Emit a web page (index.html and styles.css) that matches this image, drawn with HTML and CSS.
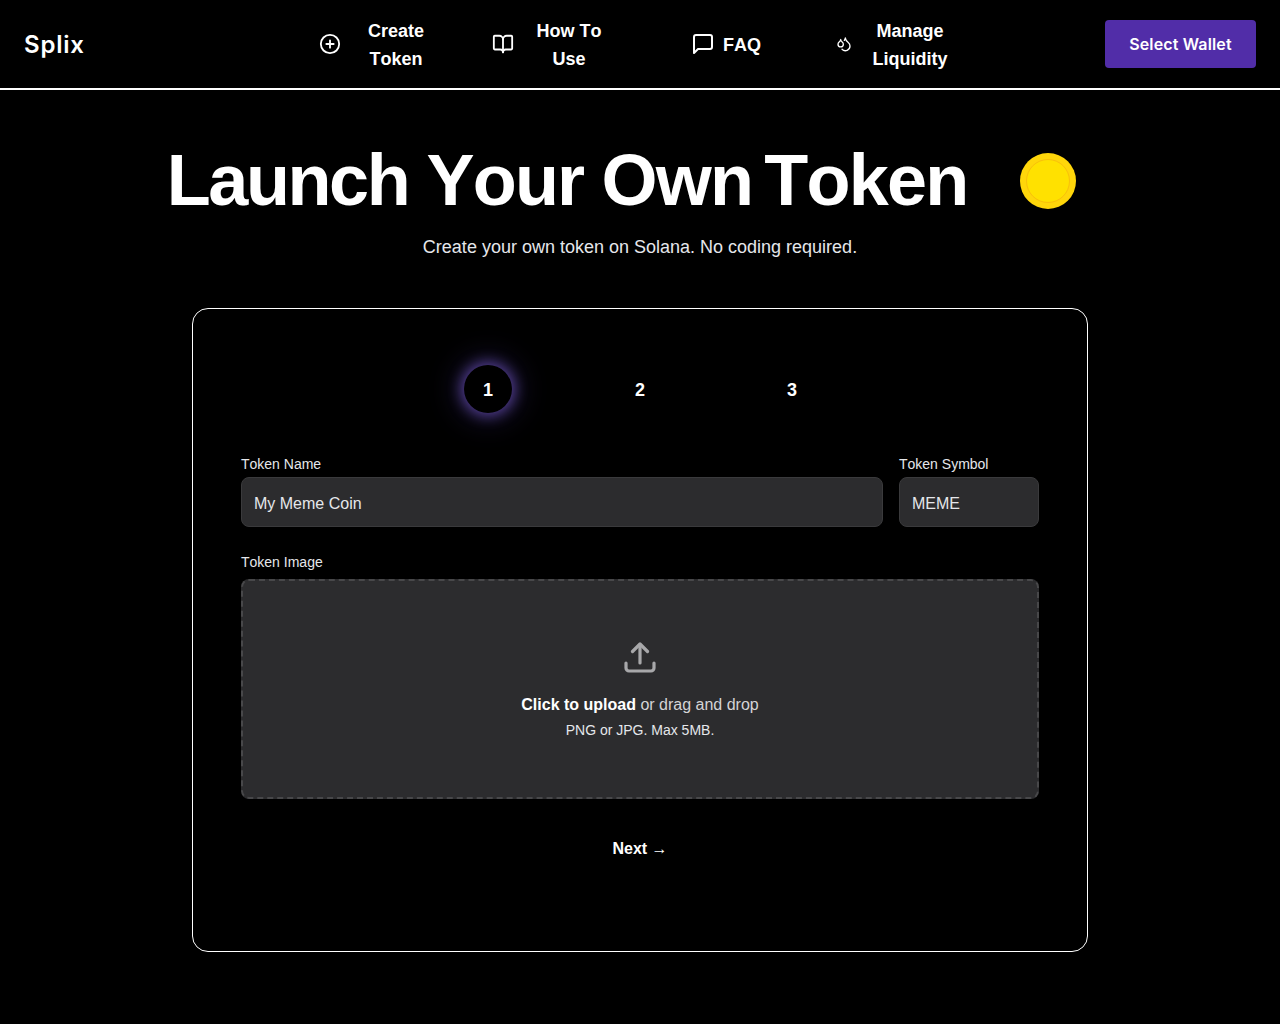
FILE: index.html
```html
<!DOCTYPE html>
<html lang="en">
<head>
    <meta charset="UTF-8">
    <meta name="viewport" content="width=device-width, initial-scale=1.0">
    <title>Splix - Launch Your Own Token</title>
    <link rel="stylesheet" href="styles.css">
</head>
<body>
    <header class="topbar">
        <a class="logo" href="#">Splix</a>
        <nav class="nav-links">
            <a class="nav-link nav-link-first" href="#">
                <svg class="nav-icon" width="22" height="22" viewBox="0 0 24 24"><circle cx="12" cy="12" r="10"/><path d="M8 12h8M12 8v8"/></svg>
                <span class="nav-text">Create Token</span>
            </a>
            <a class="nav-link" href="#">
                <svg class="nav-icon" width="22" height="22" viewBox="0 0 24 24"><path d="M12 7v14"/><path d="M3 18a1 1 0 0 1-1-1V4a1 1 0 0 1 1-1h5a4 4 0 0 1 4 4 4 4 0 0 1 4-4h5a1 1 0 0 1 1 1v13a1 1 0 0 1-1 1h-6a3 3 0 0 0-3 3 3 3 0 0 0-3-3z"/></svg>
                <span class="nav-text">How To Use</span>
            </a>
            <a class="nav-link nav-link-faq" href="#">
                <svg class="nav-icon" width="24" height="24" viewBox="0 0 24 24"><path d="M21 15a2 2 0 0 1-2 2H7l-4 4V5a2 2 0 0 1 2-2h14a2 2 0 0 1 2 2z"/></svg>
                <span class="faq-text">FAQ</span>
            </a>
            <a class="nav-link nav-link-last" href="#">
                <svg class="nav-icon" width="20" height="16" viewBox="0 0 24 24"><path d="M7 16.3c2.2 0 4-1.83 4-4.05 0-1.16-.57-2.26-1.71-3.19S7.29 6.75 7 5.3c-.29 1.45-1.14 2.84-2.29 3.76S3 11.1 3 12.25c0 2.22 1.8 4.05 4 4.05z"/><path d="M12.56 6.6A10.97 10.97 0 0 0 14 3.02c.5 2.5 2 4.9 4 6.5s3 3.5 3 5.5a6.98 6.98 0 0 1-11.91 4.97"/></svg>
                <span class="nav-text">Manage Liquidity</span>
            </a>
        </nav>
        <button class="wallet-btn">Select Wallet</button>
    </header>

    <main class="page">
        <div class="hero-title">
            <h1><span class="title-first">Launch</span> Your Own <span class="title-last">Token</span></h1>
            <div class="coin"><div class="coin-inner"></div></div>
        </div>
        <p class="subtitle">Create your own token on Solana. No coding required.</p>

        <section class="card">
            <div class="steps">
                <div class="step step-active">1</div>
                <div class="step">2</div>
                <div class="step">3</div>
            </div>

            <div class="field-row">
                <div class="field field-name">
                    <label for="tokenName">Token Name</label>
                    <input id="tokenName" type="text" placeholder="My Meme Coin">
                </div>
                <div class="field field-symbol">
                    <label for="tokenSymbol">Token Symbol</label>
                    <input id="tokenSymbol" type="text" placeholder="MEME">
                </div>
            </div>

            <div class="field field-image">
                <label>Token Image</label>
                <div class="dropzone">
                    <svg class="upload-icon" width="32" height="32" viewBox="0 0 32 32"><path d="M2 21v5a3 3 0 0 0 3 3h22a3 3 0 0 0 3-3v-5"/><path d="M16 21V3"/><path d="M8.5 9.5 16 2l7.5 7.5"/></svg>
                    <p class="drop-text"><strong>Click to upload</strong> or drag and drop</p>
                    <p class="drop-hint">PNG or JPG. Max 5MB.</p>
                </div>
            </div>

            <button class="next-btn">Next →</button>
        </section>
    </main>
</body>
</html>
```

FILE: styles.css
```css
* {
    box-sizing: border-box;
}

body {
    margin: 0;
    background-color: #000;
    color: #fff;
    font-family: "Liberation Sans", Arial, sans-serif;
    font-kerning: none;
}

a {
    color: inherit;
    text-decoration: none;
}

.topbar {
    display: grid;
    grid-template-columns: 1fr auto 1fr;
    align-items: center;
    height: 90px;
    padding: 0 24px;
    border-bottom: 2px solid #fff;
}

.logo {
    font-family: Inter, sans-serif;
    font-size: 24px;
    font-weight: 600;
    letter-spacing: 0.8px;
}

.nav-links {
    display: flex;
    align-items: center;
    gap: 49px;
    margin-left: -4px;
}

.nav-link {
    display: flex;
    align-items: center;
    gap: 7px;
    font-size: 18px;
    font-weight: 700;
    line-height: 28px;
}

.nav-link-first {
    margin-right: -1px;
}

.nav-link-faq {
    gap: 8px;
    margin: 0 24px 0 25px;
}

.nav-link-last {
    gap: 8px;
    margin-right: -1px;
}

.nav-text {
    width: 96px;
    padding-top: 2px;
    text-align: center;
}

.faq-text {
    padding-top: 2px;
}

.nav-icon {
    flex: none;
    fill: none;
    stroke: #fff;
    stroke-width: 2;
    stroke-linecap: round;
    stroke-linejoin: round;
}

.wallet-btn {
    justify-self: end;
    width: 151px;
    height: 48px;
    border: none;
    border-radius: 4px;
    background-color: #512da8;
    color: #fff;
    font-family: Inter, sans-serif;
    font-size: 16px;
    font-weight: 600;
    letter-spacing: 0.15px;
}

.page {
    display: flex;
    flex-direction: column;
    align-items: center;
    padding-bottom: 72px;
}

.hero-title {
    display: flex;
    align-items: center;
    gap: 53px;
    height: 92px;
    margin-top: 44px;
}

.hero-title h1 {
    margin: 0;
    font-size: 72px;
    font-weight: 700;
    line-height: 92px;
    letter-spacing: -1.8px;
}

.title-first {
    letter-spacing: -2.4px;
}

.title-last {
    margin-left: -6px;
}

.coin {
    display: flex;
    align-items: center;
    justify-content: center;
    width: 56px;
    height: 56px;
    margin-top: 2px;
    margin-right: 37px;
    border-radius: 50%;
    background-color: #ffd60a;
}

.coin-inner {
    width: 44px;
    height: 44px;
    border: 1px solid #f9c00b;
    border-radius: 50%;
    background-color: #ffe100;
}

.subtitle {
    margin: 7px 0 0;
    font-size: 18px;
    line-height: 28px;
    color: #e5e7eb;
}

.card {
    width: 896px;
    height: 644px;
    margin-top: 47px;
    padding: 56px 48px 48px;
    border: 1px solid #fff;
    border-radius: 16px;
}

.steps {
    display: flex;
    justify-content: center;
    gap: 104px;
    margin-bottom: 41px;
}

.step {
    display: flex;
    align-items: center;
    justify-content: center;
    width: 48px;
    height: 48px;
    padding-top: 3px;
    border-radius: 50%;
    font-size: 18px;
    font-weight: 700;
}

.step-active {
    box-shadow: 0 0 14px 3px rgba(120, 90, 210, 0.65), 0 0 30px 8px rgba(90, 70, 180, 0.25);
}

.field-row {
    display: flex;
    gap: 16px;
    margin-bottom: 25px;
}

.field-name {
    flex: 1;
}

.field-symbol {
    width: 140px;
}

.field label {
    display: block;
    margin-bottom: 3px;
    font-size: 14px;
    line-height: 20px;
    color: #e5e7eb;
}

.field-image label {
    margin-bottom: 7px;
}

.field input {
    display: block;
    width: 100%;
    height: 50px;
    padding: 3px 12px 0;
    border: 1px solid #3a3a3c;
    border-radius: 8px;
    background-color: #2c2c2e;
    color: #fff;
    font-family: inherit;
    font-size: 16px;
}

.field input::placeholder {
    color: #e5e7eb;
    opacity: 1;
}

.dropzone {
    display: flex;
    flex-direction: column;
    align-items: center;
    height: 220px;
    padding-top: 61px;
    border: 2px dashed #48484a;
    border-radius: 8px;
    background-color: #2c2c2e;
}

.upload-icon {
    fill: none;
    stroke: #a8a8aa;
    stroke-width: 3.2;
    stroke-linecap: round;
    stroke-linejoin: round;
}

.drop-text {
    margin: 19px 0 0;
    font-size: 16px;
    line-height: 24px;
    color: #d4d4d6;
}

.drop-text strong {
    color: #fff;
}

.drop-hint {
    margin: 3px 0 0;
    font-size: 14px;
    line-height: 20px;
    color: #e5e7eb;
}

.next-btn {
    display: block;
    margin: 38px auto 0;
    padding: 0;
    border: none;
    background: none;
    color: #fff;
    font-family: inherit;
    font-size: 16px;
    font-weight: 700;
    line-height: 24px;
}
```
